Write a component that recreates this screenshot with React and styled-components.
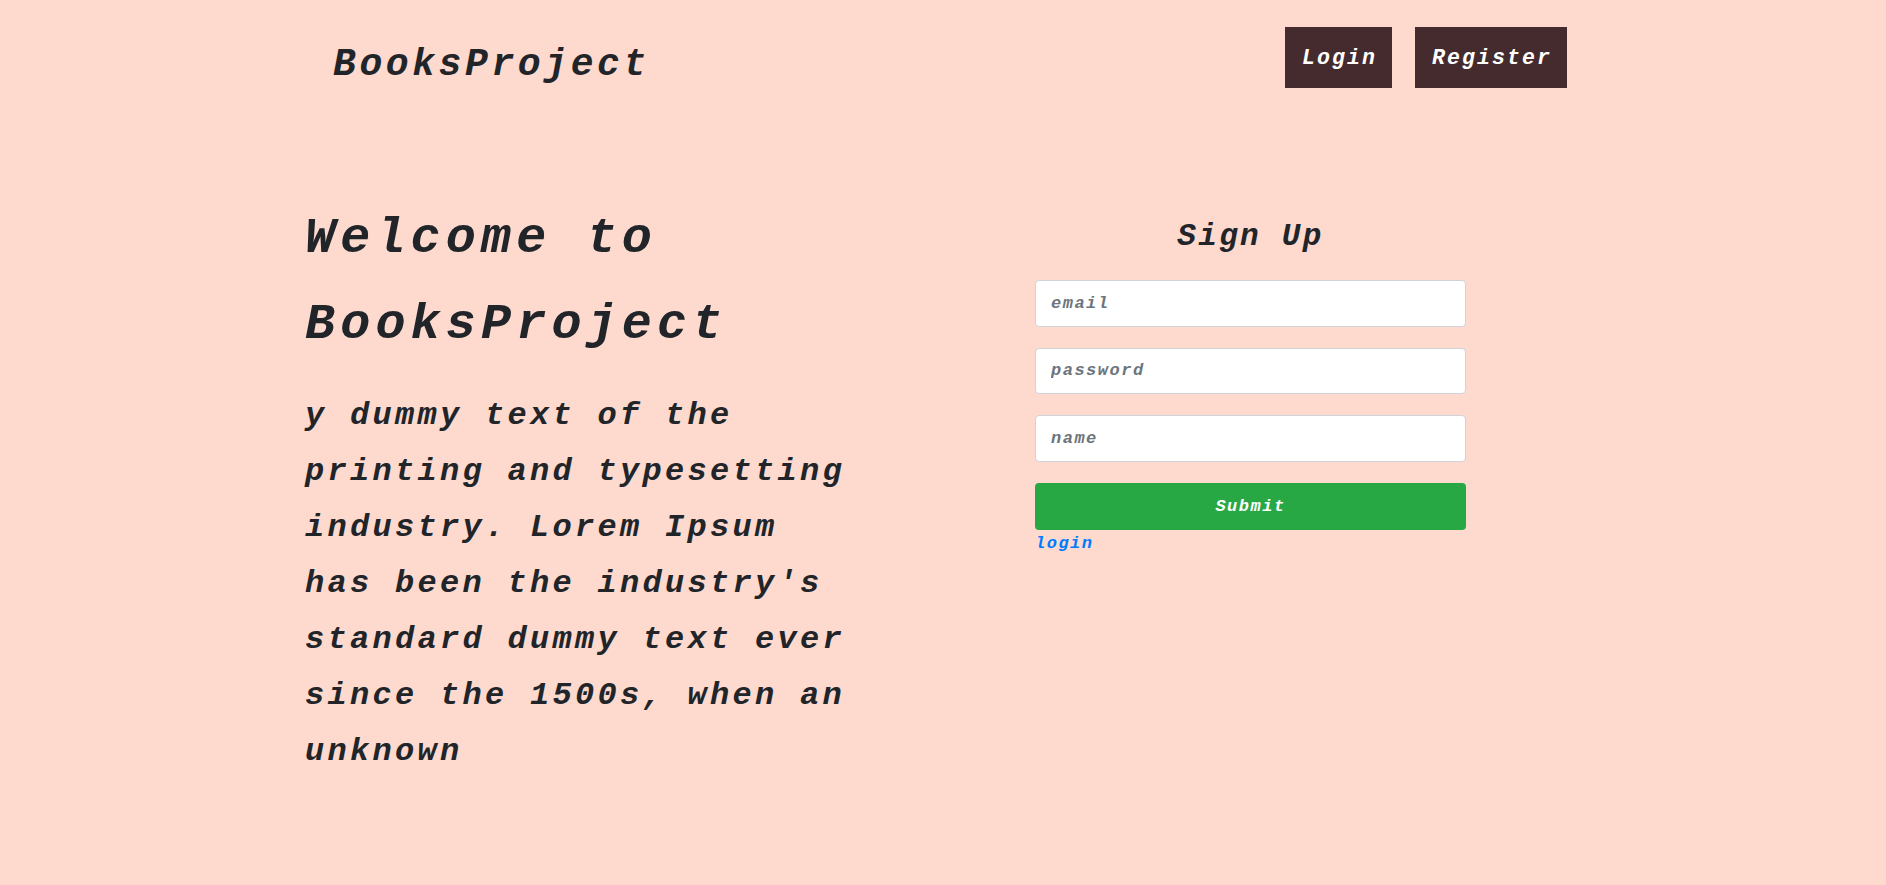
import React from 'react';
import styled, { createGlobalStyle } from 'styled-components';

const GlobalStyle = createGlobalStyle`
  body {
    margin: 0;
    background-color: #fdd9ce;
    color: #212529;
    font-family: "Liberation Mono", "Courier New", monospace;
    font-weight: bold;
    font-style: italic;
  }
`;

const Page = styled.div`
  width: 1280px;
  margin: 0 auto;
  min-height: 885px;
`;

const Nav = styled.nav`
  display: flex;
  justify-content: space-between;
  align-items: flex-start;
  padding: 27px 16px 0 30px;
`;

const Brand = styled.a`
  font-size: 38px;
  letter-spacing: 3.6px;
  line-height: 49px;
  margin-top: 13px;
  color: #212529;
  text-decoration: none;
`;

const NavButtons = styled.div`
  display: flex;
  gap: 23px;
`;

const NavButton = styled.button`
  height: 61px;
  padding: 0 15px 0 17px;
  border: none;
  background-color: #452b2e;
  color: #fff;
  font-family: inherit;
  font-weight: bold;
  font-style: italic;
  font-size: 21.5px;
  letter-spacing: 2.1px;
`;

const Main = styled.main`
  display: grid;
  grid-template-columns: 732px 431px;
  margin-top: 107px;
`;

const Intro = styled.section`
  width: 552px;
  padding-left: 2px;
`;

const Heading = styled.h1`
  margin: 0;
  font-size: 50px;
  letter-spacing: 5.2px;
  line-height: 86px;
  font-weight: bold;
`;

const Lead = styled.p`
  margin: 20px 0 0;
  font-size: 32px;
  letter-spacing: 3.3px;
  line-height: 56px;
`;

const Form = styled.form`
  display: flex;
  flex-direction: column;
  padding-top: 21px;
`;

const FormTitle = styled.h2`
  margin: 0 0 23px;
  text-align: center;
  font-size: 31px;
  letter-spacing: 2.3px;
  line-height: 40px;
  font-weight: bold;
`;

const Input = styled.input`
  box-sizing: border-box;
  height: 46.5px;
  margin-bottom: 21px;
  padding: 0 15px;
  border: 1px solid #ced4da;
  border-radius: 4px;
  background: #fff;
  font-family: inherit;
  font-weight: bold;
  font-style: italic;
  font-size: 17px;
  letter-spacing: 1.5px;
  color: #495057;

  &::placeholder {
    color: #6c757d;
  }
`;

const Submit = styled.button`
  height: 47px;
  border: none;
  border-radius: 4px;
  background-color: #28a745;
  color: #fff;
  font-family: inherit;
  font-weight: bold;
  font-style: italic;
  font-size: 17px;
  letter-spacing: 1.5px;
`;

const LoginLink = styled.a`
  align-self: flex-start;
  font-size: 17px;
  letter-spacing: 1.5px;
  line-height: 28px;
  color: #007bff;
  text-decoration: none;
`;

export default function App() {
  return (
    <>
      <GlobalStyle />
      <Page>
        <Nav>
          <Brand href="#">BooksProject</Brand>
          <NavButtons>
            <NavButton>Login</NavButton>
            <NavButton>Register</NavButton>
          </NavButtons>
        </Nav>
        <Main>
          <Intro>
            <Heading>Welcome to BooksProject</Heading>
            <Lead>
              y dummy text of the printing and typesetting industry. Lorem Ipsum has been the
              industry's standard dummy text ever since the 1500s, when an unknown
            </Lead>
          </Intro>
          <Form onSubmit={e => e.preventDefault()}>
            <FormTitle>Sign Up</FormTitle>
            <Input type="email" placeholder="email" />
            <Input type="password" placeholder="password" />
            <Input type="text" placeholder="name" />
            <Submit type="submit">Submit</Submit>
            <LoginLink href="#">login</LoginLink>
          </Form>
        </Main>
      </Page>
    </>
  );
}
